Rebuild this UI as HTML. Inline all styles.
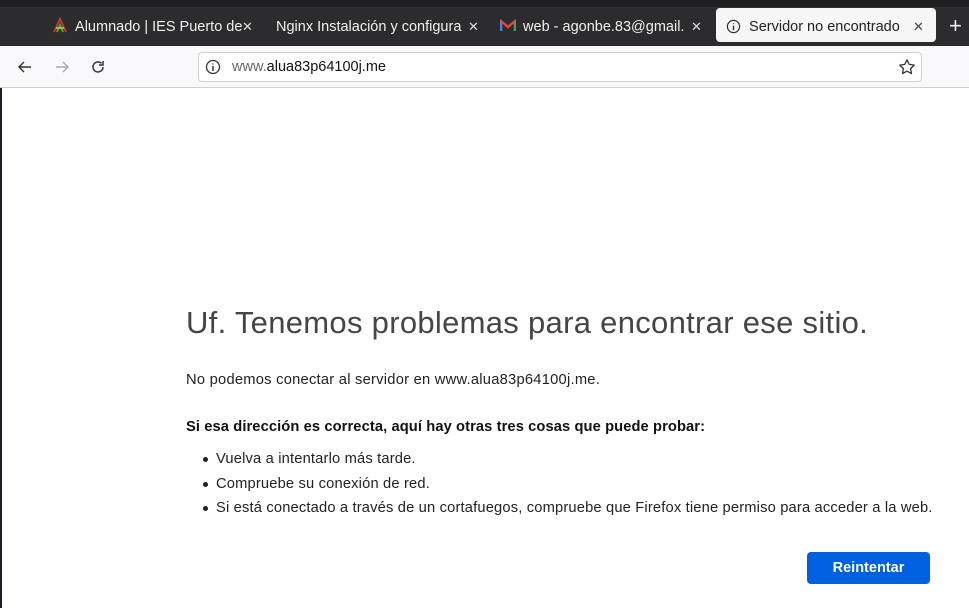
<!DOCTYPE html>
<html><head><meta charset="utf-8"><style>
*{margin:0;padding:0;box-sizing:border-box}
body{width:969px;height:608px;overflow:hidden;background:#fff;font-family:"Liberation Sans",sans-serif;position:relative}
.tabbar{position:absolute;left:0;top:0;width:969px;height:46px;background:#2c2c2e}
.strip{position:absolute;left:0;top:0;width:969px;height:7px;background:#1f1f21}
.tab{position:absolute;top:8px;height:34px;color:#f0f0f0;font-size:14.5px;line-height:34px;padding-top:2px;white-space:nowrap;overflow:hidden}
.x{position:absolute;top:2px;color:#ddd;font-size:13px}
.active{background:#f7f7f8;border-radius:4px;color:#222}
.toolbar{position:absolute;left:0;top:46px;width:969px;height:42px;background:#f9f9fb;border-bottom:1px solid #d0d0d4}
.url{position:absolute;left:198px;top:6px;width:724px;height:30px;background:#fff;border:1px solid #cfcfd4;border-radius:4px}
.leftbar{position:absolute;left:0;top:88px;width:2px;height:520px;background:#1e1e24}
.content{position:absolute;left:186px;color:#222}
h1{font-weight:300;font-size:31px;color:#454545;letter-spacing:0.3px;top:305px;position:absolute;left:186px;white-space:nowrap}
p,li{font-size:14.7px;white-space:nowrap;letter-spacing:0.25px}
ul{list-style:none}
li{position:relative;padding-left:30px;height:24.5px;letter-spacing:0.17px}
li:before{content:"";position:absolute;left:17px;top:6px;width:5px;height:5px;border-radius:50%;background:#222}
.btn{position:absolute;left:807px;top:552px;width:123px;height:32px;background:#0061e0;border-radius:4px;color:#fff;font-weight:bold;font-size:14.5px;text-align:center;line-height:32px}
</style></head><body>
<div class="tabbar"><div class="strip"></div>
  <div class="tab" style="left:52px;width:200px">
    <svg width="16" height="16" viewBox="0 0 16 16" style="vertical-align:-2px"><path d="M2 15 L8 2 L14 15" fill="none" stroke="#c0392b" stroke-width="2"/><path d="M5 15 L8 8 L11 15" fill="none" stroke="#27ae60" stroke-width="2"/><path d="M4 11h8" stroke="#f1c40f" stroke-width="1.5"/></svg>
    <span style="margin-left:3px">Alumnado | IES Puerto de</span><span class="x" style="left:190px">✕</span></div>
  <div class="tab" style="left:276px;width:202px">Nginx Instalación y configura<span class="x" style="left:192px">✕</span></div>
  <div class="tab" style="left:500px;width:202px">
    <svg width="16" height="13" viewBox="0 0 16 13" style="vertical-align:-1px"><path d="M1 12V2l7 6 7-6v10" fill="none" stroke="#ea4335" stroke-width="2.4"/><path d="M1 12V3" stroke="#4285f4" stroke-width="2.4"/><path d="M15 12V3" stroke="#34a853" stroke-width="2.4"/></svg>
    <span style="margin-left:3px">web - agonbe.83@gmail.</span><span class="x" style="left:191px">✕</span></div>
  <div class="tab active" style="left:716px;width:220px">
    <svg width="15" height="15" viewBox="0 0 16 16" style="vertical-align:-3px;margin-left:10px"><circle cx="8" cy="8" r="6.5" fill="none" stroke="#333" stroke-width="1.3"/><path d="M8 7v5M8 4.5v1" stroke="#333" stroke-width="1.5"/></svg>
    <span style="margin-left:4px">Servidor no encontrado</span><span class="x" style="left:197px;color:#444">✕</span></div>
  <div class="tab" style="left:949px;font-size:22px;color:#eee;top:7px">+</div>
</div>
<div class="toolbar">
  <svg style="position:absolute;left:17px;top:13px" width="16" height="16" viewBox="0 0 16 16"><path d="M14 8H2M7 3L2 8l5 5" fill="none" stroke="#333" stroke-width="1.4"/></svg>
  <svg style="position:absolute;left:54px;top:13px" width="16" height="16" viewBox="0 0 16 16"><path d="M2 8h12M9 3l5 5-5 5" fill="none" stroke="#aaa" stroke-width="1.4"/></svg>
  <svg style="position:absolute;left:90px;top:13px" width="16" height="16" viewBox="0 0 16 16"><path d="M13 8a5 5 0 1 1-1.5-3.6" fill="none" stroke="#333" stroke-width="1.5"/><path d="M13 2v4h-4" fill="none" stroke="#333" stroke-width="1.5"/></svg>
  <div class="url">
    <svg style="position:absolute;left:6px;top:6px" width="16" height="16" viewBox="0 0 16 16"><circle cx="8" cy="8" r="6.5" fill="none" stroke="#333" stroke-width="1.3"/><path d="M8 7v5M8 4.5v1" stroke="#333" stroke-width="1.5"/></svg>
    <span style="position:absolute;left:33px;top:6px;font-size:14.5px;color:#666">www.<span style="color:#111">alua83p64100j.me</span></span>
    <svg style="position:absolute;left:699px;top:5px" width="18" height="18" viewBox="0 0 18 18"><path d="M9 1.8l2.2 4.6 5 .7-3.6 3.5.9 5L9 13.2l-4.5 2.4.9-5L1.8 7.1l5-.7z" fill="none" stroke="#333" stroke-width="1.3" stroke-linejoin="round"/></svg>
  </div>
</div>
<div class="leftbar"></div>
<h1>Uf. Tenemos problemas para encontrar ese sitio.</h1>
<p class="content" style="top:372px">No podemos conectar al servidor en www.alua83p64100j.me.</p>
<p class="content" style="top:419px;font-weight:bold;color:#111;letter-spacing:0.1px">Si esa dirección es correcta, aquí hay otras tres cosas que puede probar:</p>
<ul class="content" style="top:451px">
<li>Vuelva a intentarlo más tarde.</li>
<li>Compruebe su conexión de red.</li>
<li>Si está conectado a través de un cortafuegos, compruebe que Firefox tiene permiso para acceder a la web.</li>
</ul>
<div class="btn">Reintentar</div>
</body></html>
